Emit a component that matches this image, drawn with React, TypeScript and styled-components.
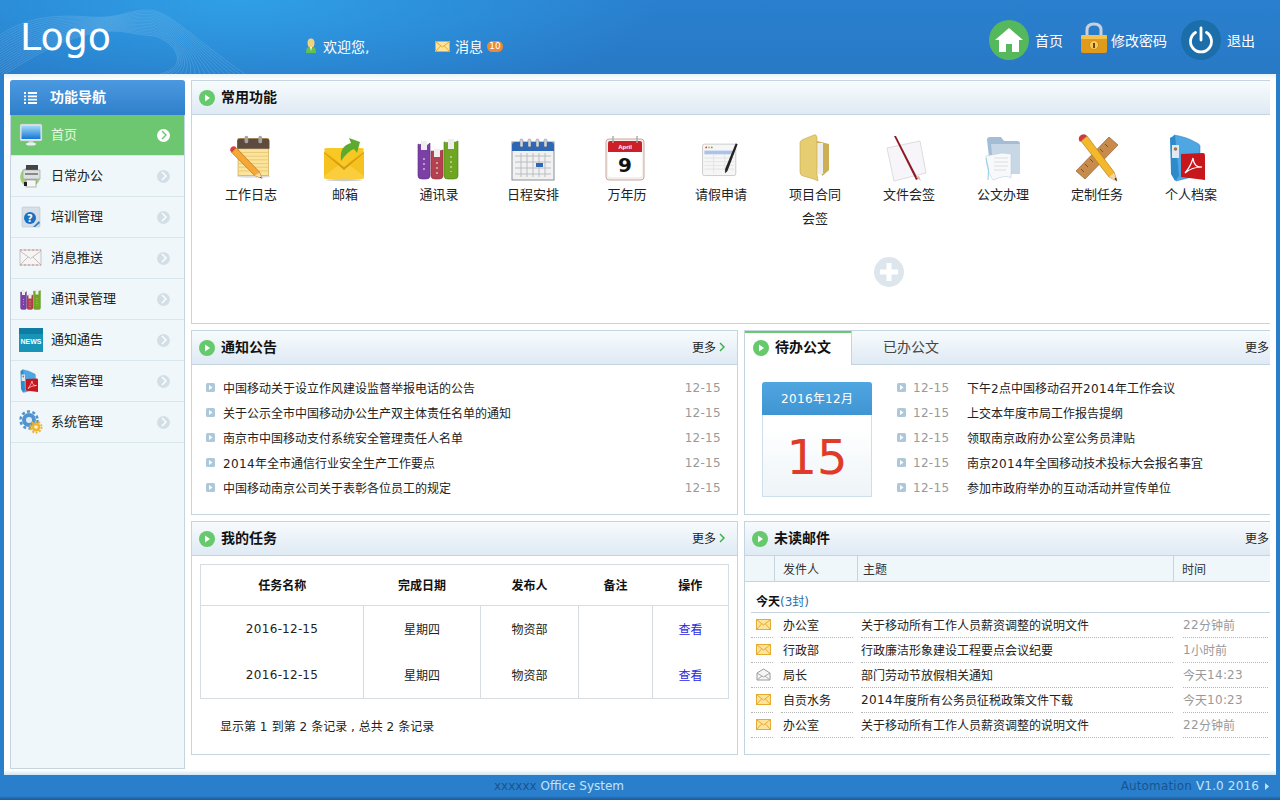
import React from "react";
import styled, { createGlobalStyle } from "styled-components";

const Global = createGlobalStyle`
  html, body { margin: 0; padding: 0; height: 100%; overflow: hidden; }
  body { font-family: "DejaVu Sans", "Noto Sans CJK SC", sans-serif; font-size: 12px; color: #222; }
  * { box-sizing: border-box; }
`;

type IconProps = { size?: number };

const NoteIcon = () => (
  <svg width="48" height="48" viewBox="-2 -1 52 52">
    <ellipse cx="27" cy="45" rx="18" ry="1.500" fill="#ddd" />
    <rect x="10" y="4" width="33" height="40" fill="#fbe49b" stroke="#d8b866" />
    {[15, 19, 23, 27, 31, 35, 39].map((y) => <path key={y} d={`M10 ${y}H43`} stroke="#e9c777" />)}
    <path d="M9 15V7Q9 4 12 4H41Q44 4 44 7V15Z" fill="#5e4b40" />
    <rect x="17" y="1" width="4" height="8" rx="2" fill="#a7a29c" />
    <rect x="32" y="1" width="4" height="8" rx="2" fill="#a7a29c" />
    <path d="M3 19L8 14L33 40L36 47L28 44Z" fill="#f5a836" stroke="#b06c16" strokeWidth=".7" />
    <path d="M28 44L33 41L36 47Z" fill="#f3d9b0" />
    <path d="M34 45.500L36 47L33.500 46.500Z" fill="#222" />
    <path d="M1.500 17Q1 14 4 12.500Q7 12 8 14L3 19Z" fill="#d84046" />
  </svg>
);

const MailArrowIcon = () => (
  <svg width="48" height="48" viewBox="0 0 48 48">
    <rect x="3" y="16" width="40" height="29" rx="3" fill="#f6c21f" />
    <path d="M3 42L23 27L43 42V43Q43 45 41 45H5Q3 45 3 43Z" fill="#f9cd3c" />
    <path d="M3 18L23 33L43 18V19L23 36L3 19Z" fill="#d89b10" />
    <path d="M3 16Q3 14 6 14H40Q43 14 43 16L23 32Z" fill="#f8c824" />
    <path d="M20 27Q18 12 30 9L28 4L39 8L36 19L33 15Q27 17 20 27Z" fill="#5cab2f" />
    <ellipse cx="23" cy="46" rx="18" ry="1.200" fill="#ccc" />
  </svg>
);

const BooksIcon = ({ size = 48 }: IconProps) => (
  <svg width={size} height={size} viewBox="0 0 48 48">
    <path d="M3 10Q6 12 8 7L9 13Q12 12 15 9V42Q15 45 11 45H7Q3 45 3 42Z" fill="#7b3fa6" stroke="#5a2b80" strokeWidth=".6" />
    <rect x="6" y="7" width="6" height="9" fill="#eee" />
    <path d="M16 17Q19 18 21 15Q23 18 28 16V42Q28 45 24 45H20Q16 45 16 42Z" fill="#b5404f" stroke="#8a2f3c" strokeWidth=".6" />
    <rect x="19" y="15" width="6" height="8" fill="#eee" />
    <path d="M29 8Q33 10 35 6Q38 10 43 7V42Q43 45 39 45H33Q29 45 29 42Z" fill="#6ea521" stroke="#4d7b12" strokeWidth=".6" />
    <rect x="33" y="5" width="6" height="10" fill="#eee" />
    <path d="M9 24V38M22 28V40M36 22V38" stroke="#ddd" strokeWidth="1.200" strokeDasharray="2 3" />
  </svg>
);

const CalendarIcon = () => (
  <svg width="48" height="48" viewBox="0 0 48 48">
    <rect x="3" y="8" width="42" height="38" fill="#f1f1f1" stroke="#8a8f95" />
    <path d="M3 17V11Q3 8 6 8H42Q45 8 45 11V17Z" fill="#2f67b4" />
    {[11, 19, 27, 35].map((x) => <rect key={x} x={x} y="5" width="3" height="8" rx="1.500" fill="#cdd3da" stroke="#667" strokeWidth=".4" />)}
    {[22, 28, 34, 40].map((y) => <path key={y} d={`M6 ${y}H42`} stroke="#b9bdc1" />)}
    {[12, 18, 24, 30, 36].map((x) => <path key={x} d={`M${x} 19V43`} stroke="#b9bdc1" />)}
    <rect x="27" y="29" width="7" height="4" fill="#2f67b4" />
  </svg>
);

const DateIcon = () => (
  <svg width="48" height="48" viewBox="2 0 48 48">
    <rect x="5" y="5" width="38" height="41" rx="3" fill="#f5eee9" stroke="#c6a9a2" />
    <rect x="7" y="7" width="34" height="36" rx="2" fill="#fff" />
    <path d="M7 18V9Q7 7 9 7H39Q41 7 41 9V18Z" fill="#cc1f27" />
    <path d="M12 2V9M36 2V9" stroke="#aaa" strokeWidth="1.400" />
    <text x="24" y="15" fontFamily="Liberation Sans" fontSize="6" fontWeight="700" fill="#fff" textAnchor="middle">April</text>
    <text x="24" y="38" fontFamily="DejaVu Sans" fontSize="20" fontWeight="700" fill="#111" textAnchor="middle">9</text>
  </svg>
);

const FormIcon = () => (
  <svg width="48" height="48" viewBox="-2 -2 52 52">
    <rect x="4" y="9" width="36" height="34" rx="2" fill="#f6f6f6" stroke="#c9c9c9" />
    <rect x="6" y="16" width="32" height="4" fill="#a9c3ea" />
    <circle cx="8" cy="12.500" r="1" fill="#d33" /><circle cx="11" cy="12.500" r="1" fill="#da3" /><circle cx="14" cy="12.500" r="1" fill="#5b3" />
    {[24, 28, 32, 36].map((y) => <path key={y} d={`M6 ${y}H38`} stroke="#e2e2e2" />)}
    <path d="M16 20V40M28 20V40" stroke="#e2e2e2" />
    <path d="M40 8L42 9L31 38L28.500 40.500L28.500 36Z" fill="#222" />
  </svg>
);

const YellowFolderIcon = () => (
  <svg width="48" height="48" viewBox="0 0 48 48">
    <path d="M22 6L38 10V36Q36 38 31 42Z" fill="#cdb054" />
    <path d="M24 9H32V40H27Z" fill="#eceef0" />
    <path d="M9 8Q10 6 13 5L23 1Q26 0 26 5V41L27 47Q24 45 12 42Q9 41 9 38Z" fill="#e6cd72" stroke="#c6a445" strokeWidth=".6" />
  </svg>
);

const SignDocIcon = () => (
  <svg width="48" height="48" viewBox="3 0 48 48">
    <path d="M5 14L38 7L44 39L12 47Z" fill="#f7f5fa" stroke="#ddd" />
    <path d="M12 2L14 2L36 45L34 46Z" fill="#8f1820" />
    <path d="M34 43L37 42L39 47Z" fill="#d9b9a4" />
  </svg>
);

const BlueFolderIcon = () => (
  <svg width="48" height="48" viewBox="0 0 48 48">
    <path d="M8 6Q8 3 11 3H22L25 7H38Q41 7 41 10V40H12Z" fill="#a4bdd6" />
    <path d="M12 10H41V40H15Z" fill="#c8d7e6" />
    <path d="M7 22L23 19L32 20V44Q28 40 14 46Q7 36 7 22Z" fill="#f8f9fa" stroke="#b4c6d8" strokeWidth=".5" />
    <path d="M7 24Q11 36 9 46" stroke="#8ecfe4" fill="none" />
    <path d="M15 24H29M15 28H29M15 32H29M15 36H27" stroke="#ddd" />
  </svg>
);

const RulerPencilIcon = () => (
  <svg width="48" height="48" viewBox="0 0 48 48">
    <path d="M36 3L45 11L12 45L3 37Z" fill="#c78b4e" stroke="#94612d" strokeWidth=".7" />
    <path d="M32 10l3 3M27 15l3 3M22 20l3 3M17 25l3 3M12 30l3 3M8 35l3 3" stroke="#7d4f22" />
    <path d="M8 7L14 2L41 38L44 47L36 43Z" fill="#f4b82c" stroke="#b67f12" strokeWidth=".7" />
    <path d="M36 43L41 39L44 47Z" fill="#eed5ac" />
    <path d="M41.500 45L44 47L43 43.500Z" fill="#222" />
    <path d="M7 8Q4 4 8 1Q12 -1 14 2Z" fill="#cb3b42" />
  </svg>
);

const PdfFolderIcon = ({ size = 48 }: IconProps) => (
  <svg width={size} height={size} viewBox="0 0 48 48">
    <path d="M7 1Q20 3 28 8Q34 10 33 14V41L9 47Z" fill="#4ea7e3" stroke="#2d79b8" strokeWidth=".5" />
    <path d="M3 4L8 1L12 42L8 47L4 40Z" fill="#2d8acb" />
    <rect x="5" y="11" width="7" height="13" fill="#dfeaf2" />
    <circle cx="8.500" cy="15" r="1.800" fill="#a6744f" />
    <path d="M14 20L36 19Q38 19 38 22V46L14 43Z" fill="#c8161d" />
    <path d="M18 39Q24 32 26 24Q27 34 35 33Q25 33 18 39Z" fill="none" stroke="#fff" strokeWidth="1.200" />
  </svg>
);

const MonitorIcon = () => (
  <svg width="24" height="24" viewBox="0 0 24 24">
    <defs>
      <linearGradient id="screen" x1="0" y1="0" x2="0" y2="1">
        <stop offset="0" stopColor="#a5dcf7" />
        <stop offset="1" stopColor="#1477d6" />
      </linearGradient>
    </defs>
    <rect x="1" y="1" width="22" height="17" rx="1.500" fill="#e6eaed" stroke="#aab2b8" strokeWidth=".5" />
    <rect x="2.500" y="2.500" width="19" height="13.500" fill="url(#screen)" />
    <path d="M10 18H14L15 20H9Z" fill="#c9cfd3" />
    <ellipse cx="12" cy="21" rx="5" ry="1.500" fill="#eef1f3" />
  </svg>
);

const PrinterIcon = () => (
  <svg width="24" height="24" viewBox="0 0 24 24">
    <circle cx="11" cy="13" r="10" fill="#a6d17b" />
    <rect x="7" y="1" width="12" height="6" fill="#444" />
    <rect x="4" y="6" width="17" height="9" fill="#dde0e2" stroke="#888" strokeWidth=".5" />
    <rect x="6" y="9" width="13" height="2" fill="#888" />
    <rect x="7" y="16" width="10" height="7" fill="#f7f7f7" stroke="#777" strokeWidth=".5" />
    <rect x="5" y="18" width="3" height="4" fill="#222" />
  </svg>
);

const HelpIcon = () => (
  <svg width="24" height="24" viewBox="0 0 24 24">
    <rect x="3" y="2" width="18" height="20" rx="1" fill="#d4dfe8" stroke="#aebcc8" strokeWidth=".5" />
    <circle cx="11" cy="13" r="6" fill="#1f6fbf" />
    <text x="11" y="16.500" fontFamily="DejaVu Sans" fontSize="10" fontWeight="700" fill="#fff" textAnchor="middle">?</text>
    <path d="M14 22L20 16L21 18L16 22Z" fill="#2d7cc9" />
  </svg>
);

const EnvelopeIcon = () => (
  <svg width="24" height="24" viewBox="0 0 24 24">
    <rect x="1" y="4" width="21" height="15" fill="#f5f5f5" stroke="#c4c4c4" />
    <path d="M1 5L11.500 12.500L22 5M1 19L9 11M22 19L14 11" fill="none" stroke="#c0c0c0" />
    <path d="M1 19H22M1 4H22" stroke="#d88" strokeWidth="1" strokeDasharray="2 2" />
  </svg>
);

const NewsIcon = () => (
  <svg width="24" height="24" viewBox="0 0 24 24">
    <rect x="0" y="0" width="24" height="24" fill="#1894b8" />
    <path d="M0 0H24V6H0Z" fill="#0f7da2" />
    <text x="12" y="15.500" fontFamily="Liberation Sans" fontSize="7" fontWeight="700" fill="#fff" textAnchor="middle">NEWS</text>
  </svg>
);

const GearsIcon = () => (
  <svg width="24" height="24" viewBox="0 0 24 24">
    <circle cx="10" cy="10" r="7" fill="#4f94cf" />
    <circle cx="10" cy="10" r="8.500" fill="none" stroke="#4f94cf" strokeWidth="2.500" strokeDasharray="3 2.400" />
    <circle cx="10" cy="10" r="3" fill="#dcecf7" />
    <circle cx="17" cy="17" r="4.500" fill="#eeb431" />
    <circle cx="17" cy="17" r="5.600" fill="none" stroke="#eeb431" strokeWidth="1.800" strokeDasharray="2 1.500" />
    <circle cx="17" cy="17" r="1.800" fill="#fff4cf" />
  </svg>
);

const MiniMail = ({ open }: { open?: boolean }) =>
  open ? (
    <svg width="15" height="13" viewBox="0 0 15 13">
      <path d="M1 5L7.500 1L14 5V12H1Z" fill="#f5f5f5" stroke="#9a9a9a" />
      <path d="M1 5L7.500 9L14 5M1 12L6 8M14 12L9 8" fill="none" stroke="#a8a8a8" />
    </svg>
  ) : (
    <svg width="15" height="13" viewBox="0 0 15 13">
      <rect x=".5" y="1.500" width="14" height="10" fill="#fde39c" stroke="#e6ab30" />
      <path d="M1 2L7.500 7L14 2M1 11L5.500 6M14 11L9.500 6" fill="none" stroke="#e6ab30" />
    </svg>
  );

const HomeGlyph = () => (
  <svg width="28" height="26" viewBox="0 0 28 26">
    <path d="M14 1L28 13H24V25H17V17H11V25H4V13H0Z" fill="#fff" />
  </svg>
);

const LockIcon = () => (
  <svg width="28" height="32" viewBox="0 0 28 32">
    <path d="M7 15V8Q7 2 14 2Q21 2 21 8V15" fill="none" stroke="#c9d2da" strokeWidth="3" />
    <rect x="1" y="13" width="26" height="18" rx="2" fill="#e09a1c" />
    <rect x="1" y="13" width="26" height="4" rx="1" fill="#f5c34d" />
    <circle cx="14" cy="23" r="4.500" fill="#f7c95a" stroke="#b87a12" strokeWidth=".6" />
    <path d="M14 21V26" stroke="#5b3a06" strokeWidth="1.800" />
  </svg>
);

const PowerGlyph = () => (
  <svg width="28" height="28" viewBox="0 0 28 28">
    <path d="M8.500 6.500A10.500 10.500 0 1 0 19.500 6.500" fill="none" stroke="#fff" strokeWidth="2.800" strokeLinecap="round" />
    <path d="M14 2V14" stroke="#fff" strokeWidth="2.800" strokeLinecap="round" />
  </svg>
);

const UserIcon = () => (
  <svg width="14" height="16" viewBox="0 0 14 16">
    <ellipse cx="7" cy="5" rx="3.500" ry="4.500" fill="#f3d27a" />
    <path d="M2 15Q2 9 5 9H9Q12 9 12 15Z" fill="#66c04f" />
    <path d="M6 9H8L7 13Z" fill="#fff" />
  </svg>
);

const HeaderWave = () => (
  <svg width="250" height="74" viewBox="0 0 250 74">
    {Array.from({ length: 18 }).map((_, i) => (
      <path
        key={i}
        d={`M0 ${35 + i * 2.5}C30 ${15 + i * 2.5} 60 ${15 + i * 1.5} 90 ${17 + i}S130 ${9 + i * 1.5} 150 ${10 + i * 1.5}S195 ${40 + i * 1.5} ${245 - i * 5} 74`}
        fill="none"
        stroke="#fff"
        strokeOpacity=".13"
      />
    ))}
  </svg>
);

const NumPart = styled.span`
  letter-spacing: .35px;
`;

const Mixed = ({ text }: { text: string }) => (
  <>
    {text.split(/(\d+)/).map((part, i) => (i % 2 ? <NumPart key={i}>{part}</NumPart> : part))}
  </>
);

const Page = styled.div`
  height: 800px;
  display: flex;
  flex-direction: column;
  background: #2a7fcd;
  overflow: hidden;
`;

const Header = styled.header`
  position: relative;
  height: 74px;
  flex: none;
  display: flex;
  background:
    radial-gradient(ellipse 420px 110px at 240px 0, #2f9fe6 0%, rgba(47, 159, 230, 0) 100%),
    linear-gradient(#2a80ce, #2879c6);
`;

const WaveLayer = styled.div`
  position: absolute;
  left: 0;
  top: 0;
  line-height: 0;
`;

const Logo = styled.div`
  position: relative;
  width: 304px;
  padding: 14px 0 0 20px;
  font-size: 38px;
  line-height: 46px;
  color: #fff;
`;

const Greeting = styled.div<{ $w: number }>`
  position: relative;
  margin-top: 37px;
  height: 18px;
  display: flex;
  align-items: center;
  font-size: 14px;
  color: #fff;
  gap: 5px;
  width: ${(p) => p.$w}px;
`;

const Badge = styled.span`
  margin-left: -1px;
  width: 16px;
  height: 11px;
  border-radius: 6px;
  background: #e98a3c;
  color: #fff;
  font-size: 9px;
  line-height: 11px;
  text-align: center;
`;

const TopActions = styled.nav`
  margin-left: auto;
  padding: 20px 25px 0 0;
  display: flex;
`;

const TopAction = styled.div<{ $ml: number }>`
  display: flex;
  align-items: flex-start;
  height: 42px;
  margin-left: ${(p) => p.$ml}px;
  color: #fff;
  font-size: 14px;
`;

const TopLabel = styled.span<{ $gap: number }>`
  margin: 12px 0 0 ${(p) => p.$gap}px;
  line-height: 18px;
`;

const LockBox = styled.div`
  margin-top: 2px;
  line-height: 0;
`;

const RoundIcon = styled.div<{ $bg: string }>`
  width: 40px;
  height: 40px;
  border-radius: 50%;
  background: ${(p) => p.$bg};
  display: flex;
  align-items: center;
  justify-content: center;
`;

const Main = styled.main`
  height: 701px;
  flex: none;
  margin: 0 4px;
  padding: 6px;
  display: flex;
  gap: 6px;
  background:
    linear-gradient(#e9f2f8 0, #fff 6px, #fff 696px, #cfe6f3 701px);
`;

const Sidebar = styled.aside`
  width: 175px;
  flex: none;
  display: flex;
  flex-direction: column;
  background: #eff7fb;
  border: 1px solid #c5d5df;
  border-top: none;
  border-radius: 3px 3px 0 0;
`;

const SideTitle = styled.div`
  height: 35px;
  margin: 0 -1px;
  display: flex;
  align-items: center;
  padding-left: 14px;
  gap: 13px;
  border-radius: 3px 3px 0 0;
  background: linear-gradient(#4b99e0, #2f7fca);
  color: #fff;
  font-size: 14px;
  font-weight: 700;
`;

const SideTitleText = styled.span`
  padding-bottom: 3px;
`;

const SideItem = styled.div<{ $active?: boolean }>`
  height: 41px;
  display: flex;
  align-items: center;
  padding: 0 14px 0 8px;
  background: ${(p) => (p.$active ? "#6dc770" : "transparent")};
  color: ${(p) => (p.$active ? "#e6f7e2" : "#222")};
  border-bottom: 1px solid #d8e6ee;
  font-size: 13px;
`;

const SideIconBox = styled.span`
  width: 24px;
  height: 24px;
  flex: none;
  line-height: 0;
`;

const SideLabel = styled.span`
  margin-left: 8px;
  padding-bottom: 3px;
  flex: 1;
`;

const SideDot = styled.span<{ $active?: boolean }>`
  width: 13px;
  height: 13px;
  line-height: 0;
  border-radius: 50%;
  background: ${(p) => (p.$active ? "#fff" : "#d3dfe7")};
  display: flex;
  align-items: center;
  justify-content: center;
`;

const Content = styled.section`
  width: 1079px;
  flex: none;
  display: flex;
  flex-direction: column;
  gap: 6px;
`;

const Row = styled.div`
  display: flex;
  gap: 6px;
`;

const Panel = styled.div<{ $w: number; $h: number; $open?: boolean }>`
  width: ${(p) => p.$w}px;
  flex: none;
  height: ${(p) => p.$h}px;
  border: 1px solid #c5d5df;
  border-right: ${(p) => (p.$open ? "none" : "1px solid #c5d5df")};
  overflow: hidden;
  background: #fff;
`;

const PanelHead = styled.div`
  height: 34px;
  display: flex;
  align-items: center;
  padding-left: 7px;
  background: linear-gradient(#f7fbfd, #dfeaf4);
  border-bottom: 1px solid #c5d5df;
`;

const HeadTitle = styled.span`
  margin-left: 6px;
  padding-bottom: 4px;
  font-size: 14px;
  font-weight: 700;
  color: #111;
`;

const More = styled.span<{ $w: number }>`
  margin-left: auto;
  width: ${(p) => p.$w}px;
  flex: none;
  display: flex;
  align-items: center;
  gap: 3px;
  padding-bottom: 2px;
  font-size: 12px;
  color: #222;
  white-space: nowrap;
`;

const GoDot = () => (
  <svg width="16" height="16" viewBox="0 0 16 16">
    <circle cx="8" cy="8" r="8" fill="#66c96b" />
    <path d="M6 4.500L11 8L6 11.500Z" fill="#fff" />
  </svg>
);

const Chev = ({ color = "#35ad3f" }: { color?: string }) => (
  <svg width="6" height="10" viewBox="0 0 6 10">
    <path d="M1 1L5 5L1 9" fill="none" stroke={color} strokeWidth="1.400" />
  </svg>
);

const Bullet = () => (
  <svg width="9" height="9" viewBox="0 0 9 9">
    <rect width="9" height="9" rx="1.500" fill="#adc8da" />
    <path d="M3 2L6.500 4.500L3 7Z" fill="#fff" />
  </svg>
);

const FuncGrid = styled.div`
  padding: 19px 0 0 12px;
  display: flex;
`;

const FuncCell = styled.div`
  width: 94px;
  flex: none;
  display: flex;
  flex-direction: column;
  align-items: center;
  text-align: center;
  font-size: 13px;
  line-height: 24px;
  color: #222;
`;

const FuncIconBox = styled.div`
  height: 48px;
  margin-bottom: 1px;
  line-height: 0;
`;

const FuncLabel = styled.div`
  width: 60px;
`;

const AddRow = styled.div`
  padding: 26px 0 0 682px;
  line-height: 0;
`;

const NoticeList = styled.ul`
  list-style: none;
  margin: 0;
  padding: 10px 16px 0 14px;
`;

const ListRow = styled.li`
  height: 25px;
  display: flex;
  align-items: center;
  font-size: 12px;
  color: #222;
  white-space: nowrap;
`;

const RowText = styled.span`
  margin-left: 8px;
  flex: 1;
`;

const DateText = styled.span`
  color: #999;
  letter-spacing: .3px;
`;

const TabHead = styled.div`
  height: 34px;
  display: flex;
  align-items: stretch;
  background: linear-gradient(#f7fbfd, #dfeaf4);
  border-bottom: 1px solid #c5d5df;
`;

const ActiveTab = styled.div`
  width: 107px;
  margin: -1px 0 -1px 0;
  padding: 0 0 2px 8px;
  display: flex;
  align-items: center;
  background: #fff;
  border-top: 3px solid #6dc770;
  border-right: 1px solid #c5d5df;
  flex: none;
`;

const TabLabel = styled.span`
  margin-left: 31px;
  padding-bottom: 4px;
  display: flex;
  align-items: center;
  font-size: 14px;
  color: #444;
`;

const MoreWrap = styled.div`
  margin-left: auto;
  display: flex;
  width: 25px;
  overflow: hidden;
  align-items: center;
  padding-bottom: 2px;
  font-size: 12px;
  white-space: nowrap;
  color: #222;
`;

const DocBody = styled.div`
  display: flex;
  padding: 17px 0 0 17px;
`;

const CalCard = styled.div`
  width: 110px;
  height: 115px;
  flex: none;
  display: flex;
  flex-direction: column;
  border: 1px solid #cfdfe9;
  border-top: none;
  border-radius: 3px 3px 0 0;
  background: linear-gradient(#fff 40%, #eef4f8);
`;

const CalTop = styled.div`
  height: 33px;
  margin: 0 -1px;
  padding-top: 1px;
  border-radius: 3px 3px 0 0;
  background: linear-gradient(#4fa6e0, #3f95d3);
  color: #fff;
  font-size: 12px;
  line-height: 33px;
  text-align: center;
`;

const CalDay = styled.div`
  flex: 1;
  font-size: 48px;
  line-height: 84px;
  color: #e03a28;
  text-align: center;
`;

const DocList = styled.ul`
  list-style: none;
  margin: -7px 0 0 25px;
  padding: 0;
  flex: 1;
`;

const DocDate = styled(DateText)`
  margin-left: 7px;
  width: 54px;
  flex: none;
`;

const TaskTable = styled.table`
  margin: 8px 8px 0;
  width: 528px;
  border-collapse: collapse;
  table-layout: fixed;
  font-size: 12px;
  color: #222;
  border: 1px solid #d5dde2;
`;

const TaskTh = styled.th`
  height: 41px;
  font-weight: 700;
  color: #111;
  text-align: center;
  padding: 0 0 2px;
  border-bottom: 1px solid #d5dde2;
`;

const TaskTd = styled.td`
  height: 46.5px;
  text-align: center;
  padding: 0 0 1px;
  border-left: 1px solid #d5dde2;
`;

const ViewLink = styled.a`
  color: #2a2ae0;
`;

const TaskFoot = styled.div`
  padding: 20px 0 0 28px;
  font-size: 12px;
  line-height: 16px;
  color: #222;
`;

const MailHead = styled.div`
  height: 26px;
  display: grid;
  grid-template-columns: 29px 83px 316px 1fr;
  background: #eff7fb;
  border-bottom: 1px solid #c5d5df;
  font-size: 12px;
  color: #333;
`;

const MailHeadCell = styled.div<{ $pad: number }>`
  display: flex;
  align-items: center;
  padding-left: ${(p) => p.$pad}px;
  border-left: ${(p) => (p.$pad ? "1px solid #c5d5df" : "none")};
`;

const TodayRow = styled.div`
  margin: 0 0 0 6px;
  height: 31px;
  padding: 12px 0 0 5px;
  border-bottom: 1px solid #c5d5df;
  font-size: 12px;
  line-height: 16px;
  font-weight: 700;
  color: #111;
`;

const Count = styled.span`
  font-weight: 400;
  color: #2b6ea8;
`;

const MailRow = styled.div`
  height: 25px;
  display: grid;
  grid-template-columns: 22px 72px 312px 87px;
  column-gap: 8px;
  margin-left: 6px;
  font-size: 12px;
  color: #222;
  white-space: nowrap;
`;

const MailCell = styled.div<{ $muted?: boolean; $gap?: number; $inset?: number }>`
  display: flex;
  align-items: center;
  padding: 0 0 1px ${(p) => p.$inset || 0}px;
  border-bottom: 1px dotted #b5b5b5;
  color: ${(p) => (p.$muted ? "#999" : "inherit")};
  margin-left: ${(p) => p.$gap || 0}px;
`;

const Footer = styled.footer`
  height: 25px;
  flex: none;
  display: flex;
  align-items: center;
  padding: 0 0 3px 494px;
  font-size: 12px;
  background: linear-gradient(#2a7fcd 84%, #1d5f9f 96%);
`;

const FooterDim = styled.span`
  color: #17558f;
`;

const FooterLight = styled.span`
  color: #c4e3f7;
`;

const FooterRight = styled.div`
  margin-left: auto;
  padding-right: 11px;
  display: flex;
  align-items: center;
  gap: 6px;
  color: #17558f;
  letter-spacing: .15px;
`;

const funcs: { label: string; icon: React.ReactNode }[] = [
  { label: "工作日志", icon: <NoteIcon /> },
  { label: "邮箱", icon: <MailArrowIcon /> },
  { label: "通讯录", icon: <BooksIcon /> },
  { label: "日程安排", icon: <CalendarIcon /> },
  { label: "万年历", icon: <DateIcon /> },
  { label: "请假申请", icon: <FormIcon /> },
  { label: "项目合同会签", icon: <YellowFolderIcon /> },
  { label: "文件会签", icon: <SignDocIcon /> },
  { label: "公文办理", icon: <BlueFolderIcon /> },
  { label: "定制任务", icon: <RulerPencilIcon /> },
  { label: "个人档案", icon: <PdfFolderIcon /> },
];

const sideItems: { label: string; icon: React.ReactNode; active?: boolean }[] = [
  { label: "首页", icon: <MonitorIcon />, active: true },
  { label: "日常办公", icon: <PrinterIcon /> },
  { label: "培训管理", icon: <HelpIcon /> },
  { label: "消息推送", icon: <EnvelopeIcon /> },
  { label: "通讯录管理", icon: <BooksIcon size={24} /> },
  { label: "通知通告", icon: <NewsIcon /> },
  { label: "档案管理", icon: <PdfFolderIcon size={24} /> },
  { label: "系统管理", icon: <GearsIcon /> },
];

const notices = [
  "中国移动关于设立作风建设监督举报电话的公告",
  "关于公示全市中国移动办公生产双主体责任名单的通知",
  "南京市中国移动支付系统安全管理责任人名单",
  "2014年全市通信行业安全生产工作要点",
  "中国移动南京公司关于表彰各位员工的规定",
];

const docs = [
  "下午2点中国移动召开2014年工作会议",
  "上交本年度市局工作报告提纲",
  "领取南京政府办公室公务员津贴",
  "南京2014年全国移动技术投标大会报名事宜",
  "参加市政府举办的互动活动并宣传单位",
];

const mails = [
  { from: "办公室", subject: "关于移动所有工作人员薪资调整的说明文件", time: "22分钟前" },
  { from: "行政部", subject: "行政廉洁形象建设工程要点会议纪要", time: "1小时前" },
  { from: "局长", subject: "部门劳动节放假相关通知", time: "今天14:23", open: true },
  { from: "自贡水务", subject: "2014年度所有公务员征税政策文件下载", time: "今天10:23" },
  { from: "办公室", subject: "关于移动所有工作人员薪资调整的说明文件", time: "22分钟前" },
];

export default function App() {
  return (
    <Page>
      <Global />
      <Header>
        <WaveLayer><HeaderWave /></WaveLayer>
        <Logo>Logo</Logo>
        <Greeting $w={131}><UserIcon />欢迎您,</Greeting>
        <Greeting $w={120}><MiniMail />消息<Badge>10</Badge></Greeting>
        <TopActions>
          <TopAction $ml={0}>
            <RoundIcon $bg="#55b85d"><HomeGlyph /></RoundIcon>
            <TopLabel $gap={6}>首页</TopLabel>
          </TopAction>
          <TopAction $ml={17}>
            <LockBox><LockIcon /></LockBox>
            <TopLabel $gap={3}>修改密码</TopLabel>
          </TopAction>
          <TopAction $ml={14}>
            <RoundIcon $bg="#1b6ea9"><PowerGlyph /></RoundIcon>
            <TopLabel $gap={6}>退出</TopLabel>
          </TopAction>
        </TopActions>
      </Header>
      <Main>
        <Sidebar>
          <SideTitle>
            <svg width="13" height="12" viewBox="0 0 13 12">
              <path d="M0 1H2M4 1H13M0 4.300H2M4 4.300H13M0 7.600H2M4 7.600H13M0 11H2M4 11H13" stroke="#fff" strokeWidth="1.800" />
            </svg>
            <SideTitleText>功能导航</SideTitleText>
          </SideTitle>
          {sideItems.map((s) => (
            <SideItem key={s.label} $active={s.active}>
              <SideIconBox>{s.icon}</SideIconBox>
              <SideLabel>{s.label}</SideLabel>
              <SideDot $active={s.active}><Chev color={s.active ? "#6dc770" : "#fff"} /></SideDot>
            </SideItem>
          ))}
        </Sidebar>
        <Content>
          <Panel $w={1079} $h={244} $open>
            <PanelHead><GoDot /><HeadTitle>常用功能</HeadTitle></PanelHead>
            <FuncGrid>
              {funcs.map((f) => (
                <FuncCell key={f.label}>
                  <FuncIconBox>{f.icon}</FuncIconBox>
                  <FuncLabel>{f.label}</FuncLabel>
                </FuncCell>
              ))}
            </FuncGrid>
            <AddRow>
              <svg width="30" height="30" viewBox="0 0 30 30">
                <circle cx="15" cy="15" r="15" fill="#dde6ec" />
                <path d="M15 6V24M6 15H24" stroke="#fff" strokeWidth="5" />
              </svg>
            </AddRow>
          </Panel>
          <Row>
            <Panel $w={547} $h={185}>
              <PanelHead>
                <GoDot /><HeadTitle>通知公告</HeadTitle>
                <More $w={45}>更多<Chev /></More>
              </PanelHead>
              <NoticeList>
                {notices.map((n) => (
                  <ListRow key={n}>
                    <Bullet /><RowText><Mixed text={n} /></RowText><DateText>12-15</DateText>
                  </ListRow>
                ))}
              </NoticeList>
            </Panel>
            <Panel $w={526} $h={185} $open>
              <TabHead>
                <ActiveTab><GoDot /><HeadTitle>待办公文</HeadTitle></ActiveTab>
                <TabLabel>已办公文</TabLabel>
                <MoreWrap>更多</MoreWrap>
              </TabHead>
              <DocBody>
                <CalCard>
                  <CalTop><Mixed text="2016年12月" /></CalTop>
                  <CalDay>15</CalDay>
                </CalCard>
                <DocList>
                  {docs.map((d) => (
                    <ListRow key={d}>
                      <Bullet /><DocDate>12-15</DocDate><span><Mixed text={d} /></span>
                    </ListRow>
                  ))}
                </DocList>
              </DocBody>
            </Panel>
          </Row>
          <Row>
            <Panel $w={547} $h={234}>
              <PanelHead>
                <GoDot /><HeadTitle>我的任务</HeadTitle>
                <More $w={45}>更多<Chev /></More>
              </PanelHead>
              <TaskTable>
                <colgroup>
                  <col width="163" /><col width="117" /><col width="98" /><col width="74" /><col width="76" />
                </colgroup>
                <thead>
                  <tr>
                    {["任务名称", "完成日期", "发布人", "备注", "操作"].map((h) => <TaskTh key={h}>{h}</TaskTh>)}
                  </tr>
                </thead>
                <tbody>
                  {[0, 1].map((i) => (
                    <tr key={i}>
                      <TaskTd><Mixed text="2016-12-15" /></TaskTd>
                      <TaskTd>星期四</TaskTd>
                      <TaskTd>物资部</TaskTd>
                      <TaskTd />
                      <TaskTd><ViewLink>查看</ViewLink></TaskTd>
                    </tr>
                  ))}
                </tbody>
              </TaskTable>
              <TaskFoot>显示第 <Mixed text="1" /> 到第 <Mixed text="2" /> 条记录 , 总共 <Mixed text="2" /> 条记录</TaskFoot>
            </Panel>
            <Panel $w={526} $h={234} $open>
              <PanelHead>
                <GoDot /><HeadTitle>未读邮件</HeadTitle>
                <MoreWrap>更多</MoreWrap>
              </PanelHead>
              <MailHead>
                <MailHeadCell $pad={0} />
                <MailHeadCell $pad={8}>发件人</MailHeadCell>
                <MailHeadCell $pad={5}>主题</MailHeadCell>
                <MailHeadCell $pad={8}>时间</MailHeadCell>
              </MailHead>
              <TodayRow>今天<Count>(3封)</Count></TodayRow>
              {mails.map((m, i) => (
                <MailRow key={i}>
                  <MailCell $inset={5}><MiniMail open={m.open} /></MailCell>
                  <MailCell $inset={2}>{m.from}</MailCell>
                  <MailCell><Mixed text={m.subject} /></MailCell>
                  <MailCell $muted $gap={2}><Mixed text={m.time} /></MailCell>
                </MailRow>
              ))}
            </Panel>
          </Row>
        </Content>
      </Main>
      <Footer>
        <FooterDim>xxxxxx&nbsp;</FooterDim>
        <FooterLight>Office System</FooterLight>
        <FooterRight>
          <span>Automation <FooterLight>V1.0 2016</FooterLight></span>
          <svg width="4" height="7" viewBox="0 0 4 7"><path d="M0 0L4 3.500L0 7Z" fill="#bfe0f5" /></svg>
        </FooterRight>
      </Footer>
    </Page>
  );
}
